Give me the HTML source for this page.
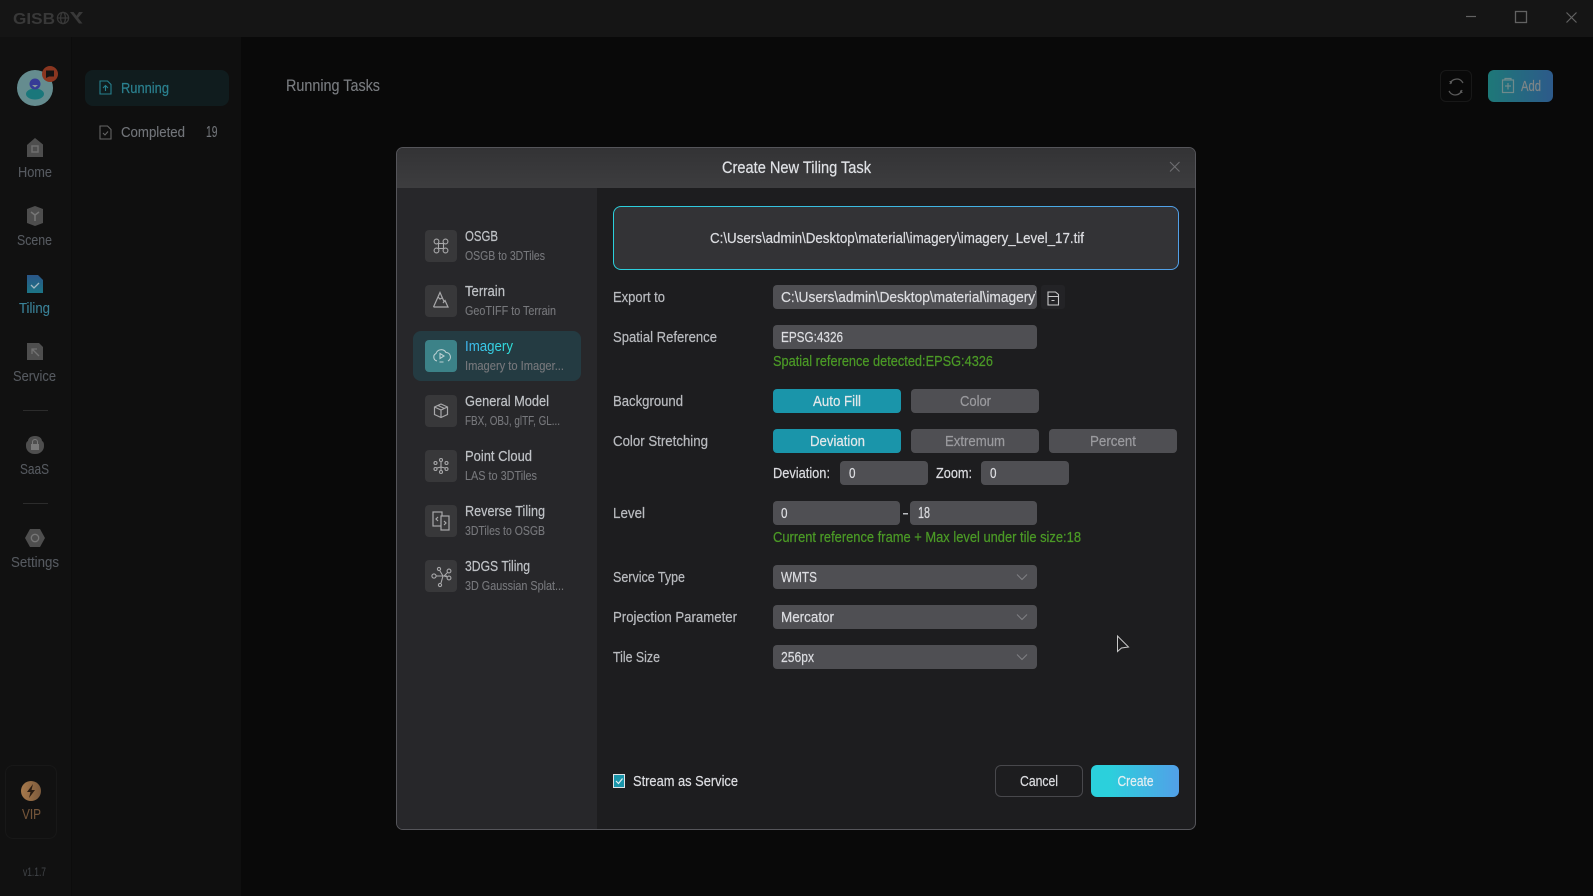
<!DOCTYPE html>
<html lang="en"><head><meta charset="utf-8"><title>GISBox</title>
<style>
html,body{margin:0;padding:0;width:1593px;height:896px;overflow:hidden;background:#090909}
div{position:absolute;box-sizing:border-box}
svg{position:absolute;left:0;top:0}
text{font-family:"Liberation Sans Narrow","Liberation Sans",sans-serif;font-size:15px;color:#b9bbbf;fill:currentColor;stroke:currentColor;stroke-width:.22px}
.s{font-size:13px;color:#77787c;stroke-width:.12px}
.t{font-size:15px;color:#bfc2c6}
.v{color:#dcdde1}
.g{color:#4b9a26}
.n{font-size:15px;color:#565a60;stroke-width:.1px}
.i{color:#9b9b9f}
.d{color:#72757a;stroke-width:.12px}
.inp{background:#4f4f53;border-radius:4px;height:24px}
.ic{left:425px;width:32px;height:32px;background:#38383a;border-radius:4px}
</style></head><body>
<div style="left:0;top:0;width:1593px;height:37px;background:#151515"></div>
<div style="left:0;top:37px;width:72px;height:859px;background:#111;border-right:1px solid #0c0c0c"></div>
<div style="left:72px;top:37px;width:169px;height:859px;background:#0f0f0f"></div>
<div style="left:85px;top:70px;width:144px;height:36px;background:#101c1e;border-radius:8px"></div>
<div style="left:1440px;top:70px;width:32px;height:32px;border:1px solid #181818;border-radius:6px"></div>
<div style="left:1488px;top:70px;width:65px;height:32px;border-radius:6px;background:linear-gradient(90deg,#1e7878,#2d5a8a)"></div>
<div style="left:5px;top:765px;width:52px;height:74px;border:1px solid #181818;border-radius:8px"></div>
<div style="left:23px;top:410px;width:25px;height:1px;background:#2c2c2c"></div>
<div style="left:23px;top:503px;width:25px;height:1px;background:#2c2c2c"></div>

<div style="left:396px;top:147px;width:800px;height:683px;background:#1d1d1f;border:1px solid #55555a;border-radius:7px;overflow:hidden">
 <div style="left:0;top:0;width:798px;height:40px;background:linear-gradient(180deg,#333335,#3d3d3f)"></div>
 <div style="left:0;top:40px;width:200px;height:641px;background:#27272a"></div>
</div>
<div style="left:413px;top:331px;width:168px;height:50px;background:#243b42;border-radius:8px"></div>
<div class="ic" style="top:230px"></div>
<div class="ic" style="top:285px"></div>
<div class="ic" style="top:340px;background:#3c8288"></div>
<div class="ic" style="top:395px"></div>
<div class="ic" style="top:450px"></div>
<div class="ic" style="top:505px"></div>
<div class="ic" style="top:560px"></div>

<div style="left:613px;top:206px;width:566px;height:64px;padding:1px;border-radius:8px;background:linear-gradient(90deg,#2bd0dc,#52a0e8)"><div style="left:1px;top:1px;right:1px;bottom:1px;background:#333336;border-radius:7px"></div></div>
<div class="inp" style="left:773px;top:285px;width:264px"></div>
<div style="left:1041px;top:285px;width:24px;height:24px;background:#232326;border-radius:3px"></div>
<div class="inp" style="left:773px;top:325px;width:264px"></div>
<div class="inp" style="left:773px;top:389px;width:128px;background:#1a95aa"></div>
<div class="inp" style="left:911px;top:389px;width:128px"></div>
<div class="inp" style="left:773px;top:429px;width:128px;background:#1a95aa"></div>
<div class="inp" style="left:911px;top:429px;width:128px"></div>
<div class="inp" style="left:1049px;top:429px;width:128px"></div>
<div class="inp" style="left:840px;top:461px;width:88px"></div>
<div class="inp" style="left:981px;top:461px;width:88px"></div>
<div class="inp" style="left:773px;top:501px;width:127px"></div>
<div class="inp" style="left:910px;top:501px;width:127px"></div>
<div class="inp" style="left:773px;top:565px;width:264px"></div>
<div class="inp" style="left:773px;top:605px;width:264px"></div>
<div class="inp" style="left:773px;top:645px;width:264px"></div>
<div style="left:995px;top:765px;width:88px;height:32px;border:1px solid #48484c;border-radius:6px"></div>
<div style="left:1091px;top:765px;width:88px;height:32px;border-radius:6px;background:linear-gradient(90deg,#2bd0dc 20%,#52a0e8)"></div>
<div style="left:613px;top:774px;width:12px;height:14px;background:#1a95aa;border:1px solid #dfe3e6"></div>

<svg width="1593" height="896" viewBox="0 0 1593 896" xmlns="http://www.w3.org/2000/svg">
<defs><clipPath id="c"><rect x="773" y="285" width="263" height="24"/></clipPath>
<linearGradient id="im" x1="0" x2="1"><stop offset="0" stop-color="#3fb6f0"/><stop offset="1" stop-color="#2fe0d8"/></linearGradient>
<linearGradient id="vp" x1="0" x2="1"><stop offset="0" stop-color="#a87a4c"/><stop offset="1" stop-color="#7c5a3c"/></linearGradient>
<linearGradient id="tl" x1="0" y1="0" x2="0" y2="1"><stop offset="0" stop-color="#2a5688"/><stop offset="1" stop-color="#1c7485"/></linearGradient></defs>

<!-- logo -->
<text x="13" y="24" textLength="42" lengthAdjust="spacingAndGlyphs" style="font-family:'Liberation Sans',sans-serif;font-size:16px;font-weight:700;color:#383838;stroke:none">GISB</text>
<g fill="none" stroke="#383838" stroke-width="1.300"><circle cx="63" cy="18" r="5.600"/><ellipse cx="63" cy="18" rx="2.400" ry="5.600"/><path d="M57.500 18h11"/></g>
<path d="M70 12h3.500l9 11.500H79zM83 12l-5 6-1.600-2L79 12z" fill="#383838"/>

<!-- window controls -->
<g stroke="#626262" stroke-width="1.200" fill="none"><path d="M1466 16.500h10"/><rect x="1515.500" y="11.500" width="11" height="11" stroke-width="1.300"/><path d="M1566.500 12.500l10 10M1576.500 12.500l-10 10"/></g>

<!-- rail -->
<circle cx="35" cy="88" r="18" fill="#658c8f"/><ellipse cx="35" cy="94" rx="9" ry="5.500" fill="#1a777b"/><circle cx="35" cy="84" r="5.500" fill="#363b96"/><path d="M32 85h6l-3 2.500z" fill="#889a9c"/>
<circle cx="50" cy="74" r="8" fill="#8a3620"/><path d="M46 70.500h8v6h-5l-3 1.500z" fill="#141414"/>
<path d="M27 145l8-7 8 6.500V157H27z" fill="#4e4e4e"/><rect x="32" y="146" width="6" height="6" fill="none" stroke="#6e6e6e" stroke-width="1.500"/>
<text class="n" x="18" y="177" textLength="34" lengthAdjust="spacingAndGlyphs">Home</text>
<path d="M35 206l8 3v14l-8 3-8-3v-14z" fill="#4e4e4e"/><path d="M31 212l4 3 4-3M35 215v6" stroke="#767676" stroke-width="1.500" fill="none"/>
<text class="n" x="17" y="245" textLength="35" lengthAdjust="spacingAndGlyphs">Scene</text>
<path d="M27 275h11l5 5v13H27z" fill="url(#tl)"/><path d="M31 285l3 3 5-5" stroke="#a4b8c2" stroke-width="1.300" fill="none"/>
<text class="n" x="19" y="313" textLength="31" lengthAdjust="spacingAndGlyphs" style="color:#3a8298">Tiling</text>
<path d="M27 343h12l4 4v13H27z" fill="#4e4e4e"/><path d="M39 356l-7-7M32 354v-5h5" stroke="#727272" stroke-width="1.300" fill="none"/>
<text class="n" x="13" y="381" textLength="43" lengthAdjust="spacingAndGlyphs">Service</text>
<path d="M35 436c5 0 7 3 7 5 2 1 2 3 2 5 0 4-3 8-9 8s-9-4-9-8c0-2 0-4 2-5 0-2 2-5 7-5z" fill="#4e4e4e"/><rect x="31" y="444" width="8" height="6" fill="#7a7a7a"/><path d="M32.500 444v-2a2.500 2.500 0 015 0v2" fill="none" stroke="#7a7a7a"/>
<text class="n" x="20" y="474" textLength="29" lengthAdjust="spacingAndGlyphs">SaaS</text>
<path d="M30 529h10l5 9-5 9H30l-5-9z" fill="#4e4e4e"/><circle cx="35" cy="538" r="3.700" fill="none" stroke="#767676" stroke-width="1.300"/>
<text class="n" x="11" y="567" textLength="48" lengthAdjust="spacingAndGlyphs">Settings</text>
<circle cx="31" cy="791" r="10" fill="url(#vp)"/><path d="M33 784l-6 8h3.500l-1.500 6 6-8h-3.500z" fill="#2a1c12"/>
<text x="22" y="819" textLength="19" lengthAdjust="spacingAndGlyphs" style="color:#74553a;stroke-width:.1px">VIP</text>
<text x="23" y="876" textLength="23" lengthAdjust="spacingAndGlyphs" style="font-size:12px;color:#404347;stroke-width:.1px">v1.1.7</text>

<!-- sub sidebar -->
<path d="M100 81h7.500l3.500 3.500V94h-11zM105.500 91v-5M103 88l2.500-2.500L108 88" fill="none" stroke="#26808f" stroke-width="1.100"/>
<text x="121" y="93" textLength="48" lengthAdjust="spacingAndGlyphs" style="color:#2b808f">Running</text>
<path d="M100 126h7.500l3.500 3.500V139h-11zM103 133l2 2 3-3.500" fill="none" stroke="#646464" stroke-width="1.100"/>
<text class="d" x="121" y="137" textLength="64" lengthAdjust="spacingAndGlyphs">Completed</text>
<text class="d" x="206" y="137" textLength="11.500" lengthAdjust="spacingAndGlyphs" style="font-size:16px">19</text>
<text x="286" y="91" textLength="94" lengthAdjust="spacingAndGlyphs" style="font-size:17px;color:#7a7d81;stroke-width:.12px">Running Tasks</text>

<!-- top right -->
<g fill="none" stroke="#5a5a5a" stroke-width="1.300"><path d="M1450 84a7 7 0 0112-2.500l1 1.500M1462 90a7 7 0 01-12 2.500l-1-1.500"/></g>
<path d="M1449 81h3v3zM1463 93h-3v-3z" fill="#5a5a5a"/>
<g fill="none" stroke="#6f8a8c" stroke-width="1.200"><rect x="1502.500" y="80" width="11" height="12.500"/><path d="M1505 80v-1.500h6V80M1508 83v6.500M1505 86h6"/></g>
<text x="1521" y="91" textLength="20" lengthAdjust="spacingAndGlyphs" style="color:#7f8688">Add</text>

<!-- modal head -->
<text x="722" y="173" textLength="149" lengthAdjust="spacingAndGlyphs" style="font-size:17px;color:#dfe1e5">Create New Tiling Task</text>
<path d="M1170 162l9.500 9.500M1179.500 162l-9.500 9.500" stroke="#6e6e71" fill="none" stroke-width="1.100"/>

<!-- left list -->
<text class="t" x="465" y="241" textLength="33" lengthAdjust="spacingAndGlyphs">OSGB</text><text class="s" x="465" y="260" textLength="80" lengthAdjust="spacingAndGlyphs">OSGB to 3DTiles</text>
<text class="t" x="465" y="296" textLength="40" lengthAdjust="spacingAndGlyphs">Terrain</text><text class="s" x="465" y="315" textLength="91" lengthAdjust="spacingAndGlyphs">GeoTIFF to Terrain</text>
<text class="t" x="465" y="351" textLength="48" lengthAdjust="spacingAndGlyphs" style="fill:url(#im);stroke:none">Imagery</text><text class="s" x="465" y="370" textLength="99" lengthAdjust="spacingAndGlyphs">Imagery to Imager...</text>
<text class="t" x="465" y="406" textLength="84" lengthAdjust="spacingAndGlyphs">General Model</text><text class="s" x="465" y="425" textLength="95" lengthAdjust="spacingAndGlyphs">FBX, OBJ, glTF, GL...</text>
<text class="t" x="465" y="461" textLength="67" lengthAdjust="spacingAndGlyphs">Point Cloud</text><text class="s" x="465" y="480" textLength="72" lengthAdjust="spacingAndGlyphs">LAS to 3DTiles</text>
<text class="t" x="465" y="516" textLength="80" lengthAdjust="spacingAndGlyphs">Reverse Tiling</text><text class="s" x="465" y="535" textLength="80" lengthAdjust="spacingAndGlyphs">3DTiles to OSGB</text>
<text class="t" x="465" y="571" textLength="65" lengthAdjust="spacingAndGlyphs">3DGS Tiling</text><text class="s" x="465" y="590" textLength="99" lengthAdjust="spacingAndGlyphs">3D Gaussian Splat...</text>

<!-- list icons -->
<g fill="none" stroke="#a8a8aa" stroke-width="1.100">
<rect x="438.500" y="243.500" width="5" height="5"/><circle cx="436.500" cy="241.500" r="2.400"/><circle cx="445.500" cy="241.500" r="2.400"/><circle cx="436.500" cy="250.500" r="2.400"/><circle cx="445.500" cy="250.500" r="2.400"/>
<path d="M433.500 307l6.500-14.500 4 9M433.500 307h14.500l-3-6.500-2 2.500M438 297l2 2 2-1" stroke-width="1.200"/>
<g stroke="#bcd0d2"><path d="M437 361a4 4 0 01-1-7.500 5.500 5.500 0 0110-1 4.500 4.500 0 012 8.500M439.500 362h4"/><path d="M440 353.500l4 2.500-4 2.500z"/></g>
<path d="M441 404l6.500 3v7.500l-6.500 3-6.500-3V407zM434.500 407l6.500 3 6.500-3M441 410v7.500M438 405.500l6.500 3" stroke-width="1.200"/>
<circle cx="441" cy="460" r="1.500"/><circle cx="441" cy="472" r="1.500"/><circle cx="435.500" cy="463" r="1.500"/><circle cx="446.500" cy="463" r="1.500"/><circle cx="435.500" cy="469" r="1.500"/><circle cx="446.500" cy="469" r="1.500"/><path d="M441 462v5M437 468l4-1M445 468l-4-1M441 467v3.500"/>
<rect x="433" y="512" width="9" height="14" stroke-width="1.200"/><rect x="441" y="516" width="8" height="14" stroke-width="1.200" fill="#38383a"/><path d="M438 517l-2 2 2 2M444 521l2 2-2 2" stroke-width="1.200"/>
<circle cx="439" cy="569" r="1.600"/><circle cx="449" cy="571" r="1.900"/><circle cx="449" cy="578" r="1.900"/><circle cx="440" cy="585" r="1.600"/><circle cx="434" cy="576" r="2.100"/><path d="M436 576h11M440 571l3 5M447.500 572.500L444 576M447.500 577L444 576M441 583l2-7"/>
</g>

<!-- form -->
<text x="710" y="243" textLength="374" lengthAdjust="spacingAndGlyphs" class="v">C:\Users\admin\Desktop\material\imagery\imagery_Level_17.tif</text>
<text x="613" y="302" textLength="52" lengthAdjust="spacingAndGlyphs">Export to</text>
<g clip-path="url(#c)"><text class="v" x="781" y="302" textLength="258" lengthAdjust="spacingAndGlyphs">C:\Users\admin\Desktop\material\imagery\</text></g>
<path d="M1048 292h7.500l3 2.500V305H1048zM1048 296.500h10.500M1051.500 300.500h3" fill="none" stroke="#c8c8ca" stroke-width="1.100"/>
<text x="613" y="342" textLength="104" lengthAdjust="spacingAndGlyphs">Spatial Reference</text>
<text class="v" x="781" y="342" textLength="62" lengthAdjust="spacingAndGlyphs">EPSG:4326</text>
<text class="g" x="773" y="366" textLength="220" lengthAdjust="spacingAndGlyphs">Spatial reference detected:EPSG:4326</text>
<text x="613" y="406" textLength="70" lengthAdjust="spacingAndGlyphs">Background</text>
<text x="813" y="406" textLength="48" lengthAdjust="spacingAndGlyphs" style="color:#e3e8ea">Auto Fill</text>
<text class="i" x="960" y="406" textLength="31" lengthAdjust="spacingAndGlyphs">Color</text>
<text x="613" y="446" textLength="95" lengthAdjust="spacingAndGlyphs">Color Stretching</text>
<text x="810" y="446" textLength="55" lengthAdjust="spacingAndGlyphs" style="color:#e3e8ea">Deviation</text>
<text class="i" x="945" y="446" textLength="60" lengthAdjust="spacingAndGlyphs">Extremum</text>
<text class="i" x="1090" y="446" textLength="46" lengthAdjust="spacingAndGlyphs">Percent</text>
<text class="v" x="773" y="478" textLength="57" lengthAdjust="spacingAndGlyphs">Deviation:</text>
<text class="v" x="849" y="478" textLength="6.500" lengthAdjust="spacingAndGlyphs">0</text>
<text class="v" x="936" y="478" textLength="36" lengthAdjust="spacingAndGlyphs">Zoom:</text>
<text class="v" x="990" y="478" textLength="6.500" lengthAdjust="spacingAndGlyphs">0</text>
<text x="613" y="518" textLength="32" lengthAdjust="spacingAndGlyphs">Level</text>
<text class="v" x="781" y="518" textLength="6.500" lengthAdjust="spacingAndGlyphs">0</text>
<rect x="903" y="513" width="5" height="1.500" fill="#b9bbbf"/>
<text class="v" x="918" y="518" textLength="12" lengthAdjust="spacingAndGlyphs" style="font-size:16px">18</text>
<text class="g" x="773" y="542" textLength="308" lengthAdjust="spacingAndGlyphs">Current reference frame + Max level under tile size:18</text>
<text x="613" y="582" textLength="72" lengthAdjust="spacingAndGlyphs">Service Type</text>
<text class="v" x="781" y="582" textLength="36" lengthAdjust="spacingAndGlyphs">WMTS</text>
<text x="613" y="622" textLength="124" lengthAdjust="spacingAndGlyphs">Projection Parameter</text>
<text class="v" x="781" y="622" textLength="53" lengthAdjust="spacingAndGlyphs">Mercator</text>
<text x="613" y="662" textLength="47" lengthAdjust="spacingAndGlyphs">Tile Size</text>
<text class="v" x="781" y="662" textLength="33" lengthAdjust="spacingAndGlyphs">256px</text>
<g fill="none" stroke="#808084" stroke-width="1"><path d="M1017 574.500l5 5 5-5M1017 614.500l5 5 5-5M1017 654.500l5 5 5-5"/></g>
<path d="M1117.500 636v15.500l4-3.500 7-1z" fill="#1d1d1f" stroke="#c8c8c8" stroke-width="1"/>
<path d="M616 781l2.500 2.500 4-5" fill="none" stroke="#e6f0f2" stroke-width="1.200"/>
<text class="v" x="633" y="786" textLength="105" lengthAdjust="spacingAndGlyphs">Stream as Service</text>
<text class="v" x="1020" y="786" textLength="38" lengthAdjust="spacingAndGlyphs">Cancel</text>
<text x="1117.500" y="786" textLength="36" lengthAdjust="spacingAndGlyphs" style="color:#e3eef2">Create</text>
</svg>
</body></html>
